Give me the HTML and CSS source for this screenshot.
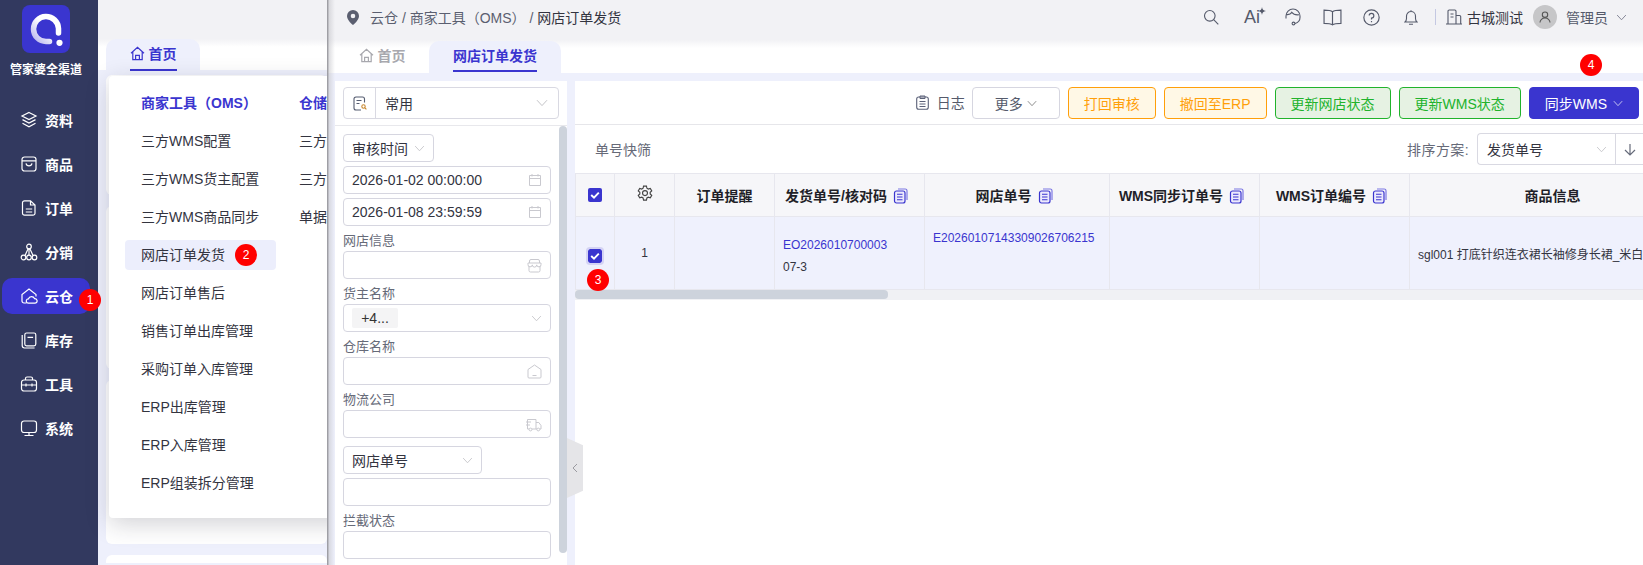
FILE: index.html
```html
<!DOCTYPE html>
<html lang="zh-CN">
<head>
<meta charset="utf-8">
<title>网店订单发货</title>
<link rel="stylesheet" href="styles.css">
</head>
<body>
<svg class="defs" width="0" height="0" aria-hidden="true">
  <defs>
    <symbol id="chev" viewBox="0 0 12 8"><path d="M1 1.2 6 6.6l5-5.400" fill="none" stroke="currentColor" stroke-width="1"/></symbol>
    <symbol id="copy" viewBox="0 0 15 16"><path d="M5 1h7.200c1 0 1.800.8 1.800 1.800v9.200" fill="none" stroke="#7d78e4" stroke-width="1.200"/><rect x="1.500" y="3" width="10.500" height="12" rx="2" fill="#eceafd" stroke="#3a35cf" stroke-width="1.200"/><path d="M4 6.300h5.500M4 9h5.500M4 11.700h5.500" stroke="#3a35cf" stroke-width="1.100"/></symbol>
    <symbol id="cal" viewBox="0 0 14 14"><path d="M1.500 2.500h11v10h-11zM1.500 5.500h11M4 1v2.500M10 1v2.500" fill="none" stroke="#c9c9cf" stroke-width="1"/></symbol>
    <symbol id="check" viewBox="0 0 14 14"><rect width="14" height="14" rx="2" fill="#3a35cf"/><path d="m3.200 7 2.800 2.700 4.800-5" fill="none" stroke="#fff" stroke-width="1.900"/></symbol>
    <symbol id="home" viewBox="0 0 15 15"><path d="M1 7.200 7.500 1.300 14 7.200M2.800 6v7.600h9.400V6M5.600 13.500V9.300h3.800v4.200" fill="none" stroke="currentColor" stroke-width="1.200"/></symbol>
  </defs>
</svg>

<aside class="side">
  <div class="logo">
    <svg width="48" height="48" viewBox="0 0 48 48">
      <defs><linearGradient id="lg" x1="0" y1="1" x2="1" y2="0"><stop offset="0" stop-color="#b9b6ee"/><stop offset=".55" stop-color="#fff"/></linearGradient></defs>
      <path d="M36.500 28V23.500A12.500 12.500 0 1 0 24 36.500h3.500" fill="none" stroke="url(#lg)" stroke-width="5.500" stroke-linecap="round"/>
      <circle cx="37.500" cy="37.800" r="3.100" fill="#fff"/>
    </svg>
  </div>
  <div class="brand">管家婆全渠道</div>
  <nav class="nav">
    <a class="nav-item"><svg class="nav-ico" viewBox="0 0 18 18"><path d="M9 1.500 16 5 9 8.500 2 5zM2.500 8.600 9 12l6.500-3.400M2.500 12.200 9 15.800l6.500-3.600" /></svg>资料</a>
    <a class="nav-item"><svg class="nav-ico" viewBox="0 0 18 18"><rect x="2" y="2" width="14" height="14" rx="2.500"/><path d="M2 5.800h14M6 8.300c.6 3.400 5.400 3.400 6 0"/></svg>商品</a>
    <a class="nav-item"><svg class="nav-ico" viewBox="0 0 18 18"><path d="M4.500 1.800h6L15 6v8.200a2 2 0 0 1-2 2H4.500a2 2 0 0 1-2-2V3.800a2 2 0 0 1 2-2zM10.500 2v4H15M5.800 10h6.400M5.800 13h6.400"/></svg>订单</a>
    <a class="nav-item"><svg class="nav-ico" viewBox="0 0 18 18"><circle cx="9" cy="3.500" r="2.300"/><circle cx="3.500" cy="14.500" r="2.300"/><circle cx="9" cy="14.500" r="2.300"/><circle cx="14.500" cy="14.500" r="2.300"/><path d="M9 5.800v6.400M5 12.600 8 6M13 12.600 10 6"/></svg>分销</a>
    <a class="nav-item active"><svg class="nav-ico" viewBox="0 0 18 18"><path d="M6.500 16H4a2 2 0 0 1-2-2V7.500L9 2l7 5.500v2"/><path d="M8.500 16.200a2.200 2.200 0 0 1 0-4.400 3.200 3.200 0 0 1 6-.2 2.300 2.300 0 0 1 .6 4.600z"/></svg>云仓</a>
    <a class="nav-item"><svg class="nav-ico" viewBox="0 0 18 18"><rect x="4.800" y="2" width="11" height="12.800" rx="1.800"/><path d="M2.200 4v10.600a2.400 2.400 0 0 0 2.400 2.400h10M7.500 6.300h5.600"/></svg>库存</a>
    <a class="nav-item"><svg class="nav-ico" viewBox="0 0 18 18"><rect x="1.500" y="5" width="15" height="11" rx="2.500"/><path d="M5.500 5V3.500a1.500 1.500 0 0 1 1.500-1.500h4a1.500 1.500 0 0 1 1.500 1.500V5M1.500 10h15M6 8.600v2.800M12 8.600v2.800"/></svg>工具</a>
    <a class="nav-item"><svg class="nav-ico" viewBox="0 0 18 18"><rect x="1.500" y="2" width="15" height="11.500" rx="2.500"/><path d="M9 13.500v3M4.500 16.500h9"/></svg>系统</a>
  </nav>
</aside>

<section class="back">
  <div class="back-top"></div>
  <div class="back-tabs"><span class="back-tab"><span class="back-tab-inner"><svg class="tab-ico" width="15" height="15"><use href="#home"/></svg>首页</span></span></div>
  <div class="cards">
    <div class="card c1"></div>
    <div class="card c2"></div>
    <div class="card c3"></div>
    <div class="card c4"></div>
  </div>
  <div class="menu">
    <div class="menu-col">
      <div class="menu-head">商家工具（OMS）</div>
      <div class="menu-item">三方WMS配置</div>
      <div class="menu-item">三方WMS货主配置</div>
      <div class="menu-item">三方WMS商品同步</div>
      <div class="menu-item on">网店订单发货</div>
      <div class="menu-item">网店订单售后</div>
      <div class="menu-item">销售订单出库管理</div>
      <div class="menu-item">采购订单入库管理</div>
      <div class="menu-item">ERP出库管理</div>
      <div class="menu-item">ERP入库管理</div>
      <div class="menu-item">ERP组装拆分管理</div>
    </div>
    <div class="menu-col">
      <div class="menu-head">仓储</div>
      <div class="menu-item">三方</div>
      <div class="menu-item">三方</div>
      <div class="menu-item">单据</div>
    </div>
  </div>
</section>

<main class="main">
  <header class="topbar">
    <svg class="pin" width="12" height="15" viewBox="0 0 12 15"><path fill-rule="evenodd" d="M6 0a6 6 0 0 1 6 6c0 3.600-3.500 6.800-6 9-2.500-2.200-6-5.400-6-9a6 6 0 0 1 6-6zm0 3.700a2.300 2.300 0 1 0 0 4.600 2.300 2.300 0 0 0 0-4.600z" fill="#5b5f70"/></svg>
    <div class="crumbs">云仓 / 商家工具（OMS） / <b>网店订单发货</b></div>
    <div class="tools">
      <svg class="tool t-search" viewBox="0 0 16 16"><circle cx="6.800" cy="6.800" r="5.300"/><path d="m10.700 10.700 4.600 4.600"/></svg>
      <span class="ai">Ai<svg class="ai-star" width="8" height="8" viewBox="0 0 8 8"><path d="M4 0c.3 2.400 1.200 3.500 4 4-2.800.5-3.700 1.600-4 4-.3-2.400-1.200-3.500-4-4 2.800-.5 3.700-1.600 4-4z" fill="#555a6b"/></svg></span>
      <svg class="tool t-head" viewBox="0 0 18 18"><path d="M2 10.500V8a7 7 0 0 1 14 0v1.500c0 2.200-1.500 5-5 6M2.500 6.500c3 .4 4.300-.5 5.300-2.200 1.400 2 4 2.900 7.200 2.500"/><circle cx="9.500" cy="15.500" r="1.400"/></svg>
      <svg class="tool t-book" viewBox="0 0 18 16"><path d="M9 2.500C7.500 1.300 4 1 1 1v12.500c3 0 6.500.3 8 1.500 1.500-1.200 5-1.500 8-1.500V1c-3 0-6.500.3-8 1.500zM9 2.500V15"/></svg>
      <svg class="tool t-help" viewBox="0 0 16 16"><circle cx="8" cy="8" r="7.200"/><path d="M5.800 6.200A2.200 2.200 0 1 1 8 8.500v1.300M8 11.300v1.200"/></svg>
      <svg class="tool t-bell" viewBox="0 0 14 16"><path d="M1 12.500h12c-1-1-1.500-2-1.500-3.500V6.500a4.500 4.500 0 0 0-9 0V9c0 1.500-.5 2.500-1.500 3.500zM5 14.800h4M7 .8v1.200"/></svg>
      <i class="tool-sep"></i>
      <svg class="tool t-build" viewBox="0 0 16 16"><path d="M2 15V2.200A1.200 1.200 0 0 1 3.200 1h5.600A1.200 1.200 0 0 1 10 2.200V15M10 6.500h3.500a1.200 1.200 0 0 1 1.200 1.200V15M0 15h16M4.500 5h3M4.500 8h3"/></svg>
      <span class="org">古城测试</span>
      <span class="avatar"><svg width="12" height="12" viewBox="0 0 12 12"><circle cx="6" cy="3.700" r="2.700" fill="none" stroke="#555" stroke-width="1.100"/><path d="M1 11.500a5 4.500 0 0 1 10 0" fill="none" stroke="#555" stroke-width="1.100"/></svg></span>
      <span class="user">管理员</span>
      <svg class="chev user-chev" width="11" height="7"><use href="#chev"/></svg>
    </div>
  </header>

  <nav class="tabs">
    <span class="tab"><svg class="tab-ico" width="15" height="15"><use href="#home"/></svg>首页</span>
    <span class="tab active"><span class="tab-text">网店订单发货</span></span>
  </nav>

  <div class="content">
    <aside class="filter">
      <div class="filter-head">
        <div class="scheme">
          <span class="scheme-ico"><svg width="14" height="15" viewBox="0 0 14 15"><path d="M11.500 6.500V3A2 2 0 0 0 9.500 1H3a2 2 0 0 0-2 2v9a2 2 0 0 0 2 2h5M3.500 4.500h5M3.500 7.500h3" fill="none" stroke="#555c70" stroke-width="1.100"/><circle cx="10.500" cy="10.500" r="1.700" fill="none" stroke="#c98a32" stroke-width="1.100"/><path d="m12 12 1.400 1.400" stroke="#c98a32" stroke-width="1.100"/></svg></span>
          <span class="scheme-text">常用</span>
          <svg class="chev" width="12" height="8"><use href="#chev"/></svg>
        </div>
      </div>
      <div class="filter-body">
        <div class="fields">
          <div class="box select w91"><span class="val">审核时间</span><svg class="chev" width="11" height="7"><use href="#chev"/></svg></div>
          <div class="box"><span class="val">2026-01-02 00:00:00</span><svg class="box-ico" width="14" height="14"><use href="#cal"/></svg></div>
          <div class="box"><span class="val">2026-01-08 23:59:59</span><svg class="box-ico" width="14" height="14"><use href="#cal"/></svg></div>
          <label class="lab">网店信息</label>
          <div class="box"><svg class="box-ico" width="15" height="15" viewBox="0 0 15 15"><path d="M2.500 5V3a1.500 1.500 0 0 1 1.500-1.500h7A1.500 1.500 0 0 1 12.500 3v2M1 5h13v1.500a2 2 0 0 1-4.300.4 2.200 2.200 0 0 1-4.400 0A2 2 0 0 1 1 6.500zM2 8v4.500A1.500 1.500 0 0 0 3.500 14h8a1.500 1.500 0 0 0 1.500-1.500V8" fill="none" stroke="#c9c9cf" stroke-width="1"/></svg></div>
          <label class="lab">货主名称</label>
          <div class="box"><span class="tag">+4...</span><svg class="chev" width="11" height="7"><use href="#chev"/></svg></div>
          <label class="lab">仓库名称</label>
          <div class="box"><svg class="box-ico" width="15" height="15" viewBox="0 0 15 15"><path d="M1 5.500 7.500 1 14 5.500V13a1 1 0 0 1-1 1H2a1 1 0 0 1-1-1zM5.500 11.500h4" fill="none" stroke="#c9c9cf" stroke-width="1"/></svg></div>
          <label class="lab">物流公司</label>
          <div class="box"><svg class="box-ico" width="16" height="15" viewBox="0 0 16 15"><path d="M3 12H1.500V2.500h8.500V12H6M10 5.500h2.800L15 8.500V12h-1.300M10 12h1M0 5h5M0 8h4" fill="none" stroke="#c9c9cf" stroke-width="1"/><circle cx="4.500" cy="12.500" r="1.400" fill="none" stroke="#c9c9cf"/><circle cx="12.300" cy="12.500" r="1.400" fill="none" stroke="#c9c9cf"/></svg></div>
          <div class="box select w139 gap-top"><span class="val">网店单号</span><svg class="chev" width="11" height="7"><use href="#chev"/></svg></div>
          <div class="box"></div>
          <label class="lab">拦截状态</label>
          <div class="box"></div>
        </div>
        <div class="scroll-v"></div>
      </div>
    </aside>

    <section class="work">
      <div class="toolbar">
        <svg class="log-ico" width="13" height="15" viewBox="0 0 13 15"><rect x=".7" y="2" width="11.600" height="12.300" rx="2" fill="none" stroke="#5b6178" stroke-width="1.100"/><path d="M4 1h5v2.500H4zM3.500 6.500h6M3.500 9h6M3.500 11.500h6" fill="none" stroke="#5b6178" stroke-width="1"/></svg>
        <span class="log">日志</span>
        <button class="btn plain">更多<svg class="chev" width="10" height="7"><use href="#chev"/></svg></button>
        <button class="btn orange">打回审核</button>
        <button class="btn orange">撤回至ERP</button>
        <button class="btn green">更新网店状态</button>
        <button class="btn green">更新WMS状态</button>
        <button class="btn primary">同步WMS<svg class="chev" width="10" height="7"><use href="#chev"/></svg></button>
      </div>
      <div class="quick">
        <span class="quick-title">单号快筛</span>
        <span class="sort-label">排序方案:</span>
        <div class="sort">
          <span class="sort-val">发货单号</span>
          <svg class="chev" width="11" height="7"><use href="#chev"/></svg>
          <span class="sort-dir"><svg width="12" height="13" viewBox="0 0 12 13"><path d="M6 1v11M1 7l5 5 5-5" fill="none" stroke="#666b7a" stroke-width="1.200"/></svg></span>
        </div>
      </div>
      <div class="table-wrap">
        <table class="grid">
          <colgroup><col class="c-a"><col class="c-b"><col class="c-c"><col class="c-d"><col class="c-e"><col class="c-f"><col class="c-g"><col class="c-h"></colgroup>
          <thead>
            <tr>
              <th><svg class="cb" width="14" height="14"><use href="#check"/></svg></th>
              <th><svg class="gear" width="18" height="18" viewBox="0 0 16 16"><path d="M6.700 1h2.600l.4 1.900 1.200.7 1.800-.6 1.300 2.200-1.400 1.300v1.400l1.400 1.300-1.300 2.200-1.800-.6-1.200.7-.4 1.900H6.700l-.4-1.900-1.200-.7-1.800.6L2 9.200l1.400-1.300V6.500L2 5.200 3.300 3l1.800.6 1.200-.7z" fill="none" stroke="#444" stroke-width="1"/><circle cx="8" cy="7.200" r="2.200" fill="none" stroke="#444" stroke-width="1"/></svg></th>
              <th>订单提醒</th>
              <th class="with-copy">发货单号/核对码<svg class="copy" width="15" height="16"><use href="#copy"/></svg></th>
              <th class="with-copy">网店单号<svg class="copy" width="15" height="16"><use href="#copy"/></svg></th>
              <th class="with-copy">WMS同步订单号<svg class="copy" width="15" height="16"><use href="#copy"/></svg></th>
              <th class="with-copy">WMS订单编号<svg class="copy" width="15" height="16"><use href="#copy"/></svg></th>
              <th>商品信息</th>
            </tr>
          </thead>
          <tbody>
            <tr>
              <td class="center low"><svg class="cb focus" width="14" height="14"><use href="#check"/></svg></td>
              <td class="center">1</td>
              <td></td>
              <td class="low"><div class="code">EO2026010700003</div><div class="verify">07-3</div></td>
              <td class="top"><span class="code">E20260107143309026706215</span></td>
              <td></td>
              <td></td>
              <td class="goods">sgl001 打底针织连衣裙长袖修身长裙_米白</td>
            </tr>
          </tbody>
        </table>
      </div>
      <div class="scroll-h"><div class="scroll-thumb"></div></div>
    </section>

    <div class="fold"><svg width="6" height="10" viewBox="0 0 6 10"><path d="M5 1 1 5l4 4" fill="none" stroke="#9a9aa0" stroke-width="1"/></svg></div>
  </div>
</main>

<span class="badge b1">1</span>
<span class="badge b2">2</span>
<span class="badge b3">3</span>
<span class="badge b4">4</span>
</body>
</html>
```
FILE: styles.css
```css
* { box-sizing: border-box; }
html, body { margin: 0; height: 565px; overflow: hidden; }
body {
  display: flex;
  position: relative;
  font-family: "Liberation Sans", "Noto Sans CJK SC", sans-serif;
  font-size: 14px;
  color: #333;
  background: #fff;
}
.defs { position: absolute; }

/* sidebar */
.side { width: 98px; flex: none; background: #32395f; color: #fff; }
.logo { width: 48px; height: 48px; margin: 5px 0 0 22px; border-radius: 8px; background: #3a35cf; }
.logo svg { display: block; }
.brand { margin-top: 9px; height: 16px; padding-right: 6px; line-height: 16px; text-align: center; font-size: 12px; font-weight: 700; white-space: nowrap; }
.nav { margin-top: 24px; }
.nav-item { display: flex; align-items: center; gap: 7px; width: 88px; height: 36px; margin: 0 0 8px 2px; padding-left: 18px; border-radius: 10px; font-weight: 700; }
.nav-item.active { background: #3a35cf; }
.nav-ico { width: 18px; height: 18px; flex: none; fill: none; stroke: #fff; stroke-width: 1.2; }

/* page behind */
.back { width: 229px; flex: none; position: relative; background: #eef0fc; }
.back-top { height: 40px; background: #f2f2f5; }
.back-tabs { height: 31px; padding-left: 8px; background: linear-gradient(#f2f2f5, #fff 8px); }
.back-tab { display: flex; justify-content: center; align-items: flex-start; width: 94px; height: 32px; margin-top: -1px; padding-top: 7px; border-radius: 10px 10px 0 0; background: #eef0fc; color: #3a35cf; font-weight: 700; line-height: 16px; }
.back-tab-inner { display: flex; gap: 4px; height: 25px; border-bottom: 2px solid #3a35cf; }
.cards { display: flex; flex-direction: column; gap: 11px; padding: 5px 0 0 8px; }
.card { background: #fff; border-radius: 6px; }
.c1 { height: 120px; }
.c2 { height: 163px; }
.c3 { height: 164px; }
.c4 { height: 8px; border-radius: 6px 6px 0 0; }
.menu { position: absolute; left: 11px; top: 76px; width: 420px; height: 442px; padding: 8px 16px 16px; display: flex; gap: 7px; background: #fff; border-radius: 4px; box-shadow: 0 6px 24px rgba(30, 30, 50, .2); z-index: 1; }
.menu-col { width: 151px; flex: none; display: flex; flex-direction: column; }
.menu-head { height: 38px; line-height: 38px; padding-left: 16px; color: #3a35cf; font-weight: 700; white-space: nowrap; }
.menu-item { height: 30px; line-height: 30px; margin: 4px 0; padding-left: 16px; border-radius: 4px; color: #33343f; white-space: nowrap; }
.menu-item.on { background: #eceefc; }

/* main */
.main { flex: 1; min-width: 0; position: relative; z-index: 2; display: flex; flex-direction: column; background: #fff; }
.main::after { content: ""; position: absolute; left: 0; top: 0; bottom: 0; width: 8px; background: linear-gradient(90deg, #8f8f95, rgba(200, 200, 205, .55) 30%, rgba(255, 255, 255, 0)); pointer-events: none; }
.topbar { height: 40px; flex: none; display: flex; align-items: center; padding: 0 16px 6px 20px; background: #f2f2f5; }
.pin { flex: none; }
.crumbs { margin-left: 11px; color: #5b5f70; white-space: nowrap; }
.crumbs b { font-weight: 400; color: #33343f; }
.tools { margin-left: auto; display: flex; align-items: center; }
.tool { flex: none; fill: none; stroke: #555a6b; stroke-width: 1.1; }
.t-search { width: 16px; height: 16px; margin-right: 25px; }
.ai { position: relative; width: 20px; margin-right: 20px; font-size: 18px; line-height: 20px; color: #555a6b; }
.ai-star { position: absolute; right: -2px; top: 0; }
.t-head { width: 18px; height: 18px; margin-right: 21px; }
.t-book { width: 19px; height: 17px; margin-right: 21px; }
.t-help { width: 17px; height: 17px; margin-right: 24px; }
.t-bell { width: 14px; height: 17px; margin-right: 17px; }
.tool-sep { width: 1px; height: 16px; margin-right: 10px; background: #c4c8e2; }
.t-build { width: 16px; height: 16px; margin-right: 5px; }
.org { color: #33343f; white-space: nowrap; }
.avatar { width: 24px; height: 24px; margin: 0 9px 0 10px; display: flex; align-items: center; justify-content: center; border-radius: 50%; background: #c6c6c8; }
.user { color: #555a6b; white-space: nowrap; }
.chev { flex: none; color: #c4c4c8; }
.user-chev { margin-left: 8px; color: #77798a; }

.tabs { height: 33px; flex: none; display: flex; align-items: flex-start; padding: 1px 0 0 8px; background: linear-gradient(#f2f2f5, #fff 8px); }
.tab { display: flex; align-items: flex-start; justify-content: center; gap: 4px; width: 94px; height: 32px; padding-top: 7px; line-height: 16px; font-weight: 700; color: #a8a8ae; }
.tab-ico { flex: none; }
.tab.active { width: 132px; background: #eef0fc; border-radius: 10px 10px 0 0; color: #3a35cf; }
.tab-text { height: 24px; border-bottom: 2px solid #3a35cf; }

.content { flex: 1; min-height: 0; overflow: hidden; position: relative; display: flex; gap: 8px; padding: 8px 0 0 8px; background: #eef0fc; }

/* filter */
.filter { width: 232px; flex: none; background: #fff; }
.filter-head { height: 45px; padding: 6px 8px 0; border-bottom: 1px solid #e8e8ec; }
.scheme { display: flex; align-items: center; height: 32px; border: 1px solid #d9d9e2; border-radius: 4px; }
.scheme-ico { width: 32px; height: 30px; display: flex; align-items: center; justify-content: center; border-right: 1px solid #d9d9e2; flex: none; }
.scheme-text { margin-left: 9px; flex: 1; color: #33343f; }
.scheme .chev { margin-right: 10px; }
.filter-body { display: flex; }
.fields { width: 224px; flex: none; padding: 8px 0 0 8px; display: flex; flex-direction: column; }
.box { width: 208px; height: 28px; flex: none; margin-bottom: 4px; display: flex; align-items: center; justify-content: flex-end; padding: 0 8px; border: 1px solid #d6d6e0; border-radius: 4px; position: relative; }
.box .val { margin-right: auto; color: #33343f; white-space: nowrap; }
.select.w91 { width: 91px; }
.select.w139 { width: 139px; }
.gap-top { margin-top: 4px; }
.box-ico { flex: none; }
.tag { margin-right: auto; width: 46px; height: 20px; line-height: 20px; text-align: center; background: #f4f4f5; border-radius: 2px; color: #333; }
.lab { height: 21px; line-height: 21px; font-size: 13px; color: #666a78; }
.scroll-v { width: 8px; height: 427px; flex: none; border-radius: 4px; background: #cdd3dc; }

/* work area */
.work { flex: 1; min-width: 0; background: #fff; }
.toolbar { height: 44px; display: flex; align-items: flex-start; justify-content: flex-end; gap: 8px; padding: 6px 4px 0 0; border-bottom: 1px solid #e6e6ea; }
.log-ico { flex: none; margin-top: 8px; }
.log { height: 32px; line-height: 32px; color: #555a6b; margin-right: -1px; }
.btn { height: 32px; display: flex; align-items: center; gap: 5px; padding: 0 15px; border: 1px solid; border-radius: 4px; font: inherit; white-space: nowrap; }
.plain { padding: 0 22px; gap: 4px; border-color: #d6d6e0; background: #fff; color: #555a6b; }
.plain .chev { color: #777; }
.orange { border-color: #ff9f0a; background: #fff8e6; color: #ff9f0a; }
.green { border-color: #21b32c; background: #e6f2e3; color: #21b32c; }
.primary { padding: 0 15px; gap: 6px; border-color: #3a35cf; background: #3a35cf; color: #fff; }
.primary .chev { color: #dcdcf5; }

.quick { height: 48px; display: flex; align-items: center; padding: 0 0 0 20px; }
.quick-title { color: #666a78; }
.sort-label { margin-left: auto; color: #666a78; white-space: nowrap; letter-spacing: .4px; }
.sort { width: 166px; height: 32px; margin-left: 8px; display: flex; align-items: center; border: 1px solid #d9d9e2; border-right: 0; border-radius: 4px 0 0 4px; }
.sort-val { flex: 1; padding-left: 9px; color: #33343f; }
.sort-dir { width: 28px; height: 30px; margin-left: 8px; display: flex; align-items: center; justify-content: center; border-left: 1px solid #d9d9e2; }

.table-wrap { overflow: hidden; }
.grid { width: 1120px; table-layout: fixed; border-collapse: collapse; font-size: 12px; }
.c-a { width: 39px; }
.c-b { width: 60px; }
.c-c { width: 100px; }
.c-d { width: 150px; }
.c-e { width: 185px; }
.c-f { width: 150px; }
.c-g { width: 150px; }
.c-h { width: 286px; }
.grid th { height: 43px; padding: 0; border: 1px solid #e7e7ee; background: #f6f6f9; font-size: 14px; color: #1f1f28; white-space: nowrap; }
.grid th.with-copy { padding-right: 6px; }
.grid td { height: 73px; padding: 0 8px; border: 1px solid #e7e7ee; background: #eff1fd; color: #33343f; white-space: nowrap; }
.grid td.top { vertical-align: top; padding-top: 14px; }
.grid td.low { padding-top: 6px; }
.center { text-align: center; }
.cb, .gear { display: block; margin: 0 auto; }
.gear { margin-top: -2px; }
.cb.focus { box-shadow: 0 0 0 2px #d4d3f4; border-radius: 2px; }
.copy { margin-left: 6px; vertical-align: -3px; }
.code { color: #3a35cf; }
.verify { margin-top: 8px; }
.scroll-h { height: 10px; background: #f0f1f4; }
.scroll-thumb { width: 313px; height: 9px; border-radius: 4px; background: #cdd3dc; }

.fold { position: absolute; left: 240px; top: 365px; width: 16px; height: 60px; display: flex; align-items: center; justify-content: center; background: #e5e5e8; clip-path: polygon(0 0, 100% 12%, 100% 88%, 0 100%); z-index: 1; }

/* numbered markers */
.badge { position: absolute; width: 22px; height: 22px; line-height: 22px; border-radius: 50%; background: #f00; color: #fff; font-size: 12px; text-align: center; z-index: 5; }
.b1 { left: 79px; top: 289px; }
.b2 { left: 235px; top: 244px; }
.b3 { left: 587px; top: 269px; }
.b4 { left: 1580px; top: 54px; }
```
